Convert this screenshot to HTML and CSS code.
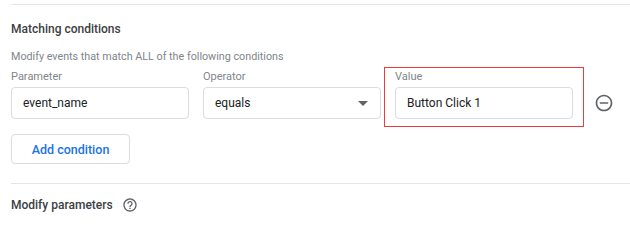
FILE: index.html
```html
<!DOCTYPE html>
<html>
<head>
<meta charset="utf-8">
<link rel="stylesheet" href="styles.css">
</head>
<body>
<div class="section">
  <div class="rule top-rule"></div>
  <h2 class="title">Matching conditions</h2>
  <p class="subtitle">Modify events that match ALL of the following conditions</p>
  <div class="cond-row">
    <div class="field">
      <label class="label">Parameter</label>
      <div class="input">event_name</div>
    </div>
    <div class="field">
      <label class="label">Operator</label>
      <div class="input select">
        <span>equals</span>
        <svg class="caret" viewBox="0 0 24 24" width="24" height="24"><path d="M7 10l5 5 5-5z" fill="#5f6368"/></svg>
      </div>
    </div>
    <div class="field highlighted">
      <label class="label">Value</label>
      <div class="input">Button Click 1</div>
      <div class="annot"></div>
    </div>
    <div class="remove">
      <svg viewBox="0 0 24 24" width="20" height="20"><path fill="#5f6368" d="M7 11v2h10v-2H7zm5-9C6.48 2 2 6.48 2 12s4.48 10 10 10 10-4.48 10-10S17.52 2 12 2zm0 18c-4.41 0-8-3.59-8-8s3.59-8 8-8 8 3.59 8 8-3.59 8-8 8z"/></svg>
    </div>
  </div>
  <button class="add-btn">Add condition</button>
  <div class="rule bottom-rule"></div>
  <div class="next-head">
    <h2 class="title next-title">Modify parameters</h2>
    <svg class="help" viewBox="0 0 24 24" width="16" height="16"><path fill="#5f6368" d="M11 18h2v-2h-2v2zm1-16C6.48 2 2 6.48 2 12s4.48 10 10 10 10-4.48 10-10S17.52 2 12 2zm0 18c-4.41 0-8-3.59-8-8s3.59-8 8-8 8 3.59 8 8-3.59 8-8 8zm0-14c-2.21 0-4 1.79-4 4h2c0-1.1.9-2 2-2s2 .9 2 2c0 2-3 1.75-3 5h2c0-2.25 3-2.5 3-5 0-2.21-1.79-4-4-4z"/></svg>
  </div>
</div>
</body>
</html>
```

FILE: styles.css
```css
* { box-sizing: border-box; }
html, body { margin: 0; padding: 0; background: #fff; overflow: hidden; }
body { font-family: Roboto, "Noto Sans", Arial, sans-serif; color: #202124; }
.section { padding-left: 11px; }
.rule { height: 1px; background: #e3e5e8; }
.top-rule { margin-top: 4px; }
.title {
  margin: 14px 0 0;
  font-size: 12px;
  line-height: 20px;
  font-weight: 500;
  color: #3c4043;
}
.subtitle {
  margin: 9.8px 0 0;
  font-size: 10.75px;
  line-height: 16px;
  color: #80868b;
}
.cond-row {
  display: flex;
  align-items: flex-end;
  gap: 14px;
  margin-top: 4.5px;
}
.field { width: 178px; display: flex; flex-direction: column; }
.highlighted { position: relative; }
.annot {
  position: absolute;
  left: -11px;
  right: -11px;
  top: -2px;
  bottom: -8px;
  border: 1px solid #ef3b3b;
  pointer-events: none;
}
.label {
  font-size: 11px;
  line-height: 16px;
  color: #80868b;
  margin-bottom: 2px;
}
.input {
  height: 32px;
  border: 1px solid #dadce0;
  border-radius: 4px;
  padding: 0 11px;
  display: flex;
  align-items: center;
  font-size: 12px;
  color: #202124;
}
.select { justify-content: space-between; padding-right: 5px; }
.caret { display: block; }
.remove {
  height: 32px;
  margin-left: 7px;
  display: flex;
  align-items: center;
}
.remove svg { display: block; }
.add-btn {
  display: block;
  margin-top: 15px;
  width: 119px;
  height: 30px;
  border: 1px solid #dadce0;
  border-radius: 4px;
  background: #fff;
  color: #1a73e8;
  font-family: Roboto, "Noto Sans", Arial, sans-serif;
  font-size: 12.5px;
  font-weight: 500;
  padding: 0;
}
.bottom-rule { margin-top: 19px; }
.next-head {
  display: flex;
  align-items: center;
  gap: 9px;
  margin-top: 10.4px;
}
.next-title { margin: 0; }
.help { display: block; }
```
